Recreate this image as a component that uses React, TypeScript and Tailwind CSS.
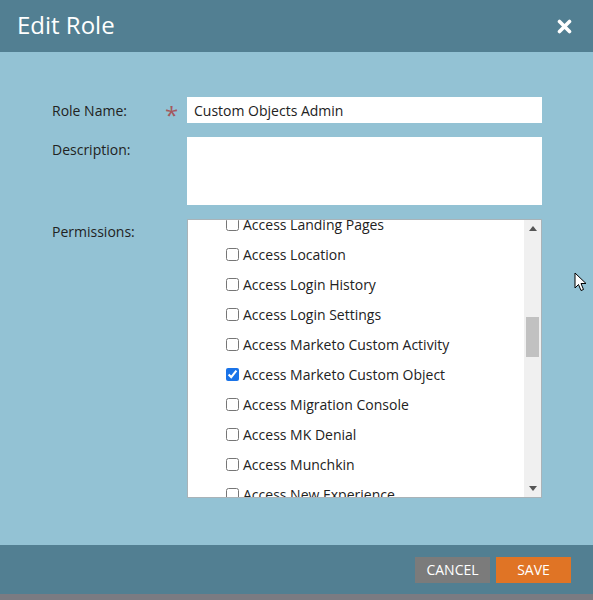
import React from 'react';

const PERMISSIONS = [
  { label: 'Access Landing Pages', checked: false },
  { label: 'Access Location', checked: false },
  { label: 'Access Login History', checked: false },
  { label: 'Access Login Settings', checked: false },
  { label: 'Access Marketo Custom Activity', checked: false },
  { label: 'Access Marketo Custom Object', checked: true },
  { label: 'Access Migration Console', checked: false },
  { label: 'Access MK Denial', checked: false },
  { label: 'Access Munchkin', checked: false },
  { label: 'Access New Experience', checked: false },
];

const font = { fontFamily: '"Open Sans", "Noto Sans", sans-serif' };

export default function App() {
  return (
    <div className="relative w-[593px] h-[600px] flex flex-col bg-[#7b7b82] overflow-hidden" style={font}>
      {/* Шапка */}
      <div className="h-[52px] shrink-0 bg-[#527f92] flex items-center justify-between pl-[17px] pr-[21px]">
        <h1 className="text-[24px] text-white leading-none pb-[2px]">Edit Role</h1>
        <svg width="15" height="15" viewBox="0 0 15 15">
          <path d="M2.5 2.5 L12.5 12.5 M12.5 2.5 L2.5 12.5" stroke="#fff" strokeWidth="3.6" strokeLinecap="round" />
        </svg>
      </div>

      {/* Форма */}
      <div className="flex-1 bg-[#93c2d4] pt-[45px] pl-[52px] pr-[51px] flex flex-col gap-[14px] text-[14px] text-[#222]">
        <div className="flex items-center h-[26px]">
          <span className="w-[113px]">Role Name:</span>
          <span className="w-[22px] text-[#a4585d] text-[24px] leading-none pt-[10px]">*</span>
          <div className="flex-1 h-[26px] bg-white flex items-center px-[7px] text-[#222]">Custom Objects Admin</div>
        </div>

        <div className="flex">
          <span className="w-[135px] pt-[2px]">Description:</span>
          <div className="flex-1 h-[68px] bg-white" />
        </div>

        <div className="flex">
          <span className="w-[135px] pt-[2px]">Permissions:</span>
          <div className="flex-1 h-[279px] bg-white border border-[#a9b3b8] flex overflow-hidden">
            <div className="flex-1 overflow-hidden">
              <div className="-mt-[11px] pl-[38px]">
                {PERMISSIONS.map(p => (
                  <label key={p.label} className="h-[30px] flex items-center gap-[4px] text-[#222] whitespace-nowrap">
                    <input
                      type="checkbox"
                      readOnly
                      checked={p.checked}
                      className="m-0 w-[13px] h-[13px] accent-[#1a73e8]"
                    />
                    {p.label}
                  </label>
                ))}
              </div>
            </div>
            {/* Полоса прокрутки */}
            <div className="w-[17px] bg-[#f0f0f0] flex flex-col items-center">
              <div className="h-[17px] flex items-center justify-center">
                <svg width="8" height="5" viewBox="0 0 8 5"><path d="M0 5 L4 0 L8 5 Z" fill="#555" /></svg>
              </div>
              <div className="h-[80px]" />
              <div className="w-[13px] h-[40px] bg-[#c1c1c1]" />
              <div className="flex-1" />
              <div className="h-[17px] flex items-center justify-center">
                <svg width="8" height="5" viewBox="0 0 8 5"><path d="M0 0 L8 0 L4 5 Z" fill="#555" /></svg>
              </div>
            </div>
          </div>
        </div>
      </div>

      {/* Подвал */}
      <div className="h-[49px] shrink-0 bg-[#527f92] flex items-center justify-end gap-[6px] pr-[22px] mb-[6px]">
        <button className="w-[75px] h-[26px] bg-[#7b7b7b] text-white text-[14px] uppercase">Cancel</button>
        <button className="w-[75px] h-[26px] bg-[#e07425] text-white text-[14px] uppercase">Save</button>
      </div>

      {/* Курсор мыши */}
      <svg className="absolute left-[574px] top-[272px]" width="13" height="20" viewBox="0 0 13 20">
        <path d="M1 1 L1 16 L4.5 12.5 L7 18.5 L9.5 17.5 L7 11.5 L12 11.5 Z" fill="#fff" stroke="#000" strokeWidth="1" strokeLinejoin="round" />
      </svg>
    </div>
  );
}
